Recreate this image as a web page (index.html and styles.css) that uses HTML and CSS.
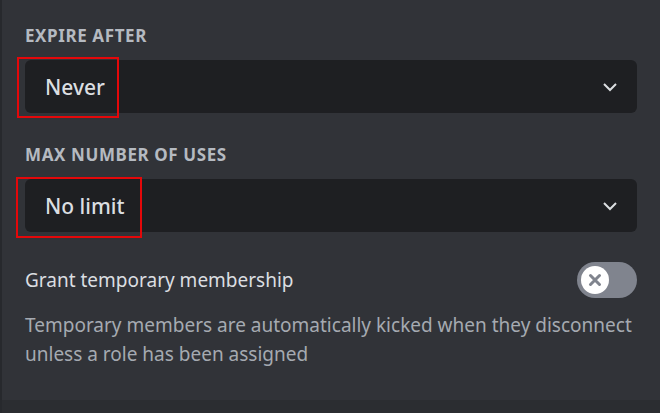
FILE: index.html
```html
<!DOCTYPE html>
<html>
<head>
<meta charset="utf-8">
<link rel="stylesheet" href="styles.css">
</head>
<body>
<div class="panel">
  <div class="content">
    <div class="field">
      <div class="label">Expire After</div>
      <div class="select">
        <span class="value">Never</span>
        <svg class="chevron" width="16" height="10" viewBox="0 0 16 10"><path d="M2 2 L8 8 L14 2" fill="none" stroke="#dbdee1" stroke-width="2"/></svg>
        <div class="mark mark-1"></div>
      </div>
    </div>
    <div class="field">
      <div class="label">Max Number of Uses</div>
      <div class="select">
        <span class="value">No limit</span>
        <svg class="chevron" width="16" height="10" viewBox="0 0 16 10"><path d="M2 2 L8 8 L14 2" fill="none" stroke="#dbdee1" stroke-width="2"/></svg>
        <div class="mark mark-2"></div>
      </div>
    </div>
    <div class="toggle-row">
      <span class="toggle-label">Grant temporary membership</span>
      <div class="toggle">
        <div class="knob">
          <svg width="16" height="16" viewBox="0 0 16 16"><path d="M3.5 3.5 L12.5 12.5 M12.5 3.5 L3.5 12.5" stroke="#80848e" stroke-width="3" stroke-linecap="round"/></svg>
        </div>
      </div>
    </div>
    <p class="desc">Temporary members are automatically kicked when they disconnect unless a role has been assigned</p>
  </div>
  <div class="footer"></div>
</div>
</body>
</html>
```

FILE: styles.css
```css
* { box-sizing: border-box; }
html, body { margin: 0; padding: 0; }
body {
  width: 660px;
  height: 413px;
  overflow: hidden;
  background: #313338;
  font-family: "Noto Sans", "Open Sans", sans-serif;
}
.panel {
  height: 413px;
  display: flex;
  flex-direction: column;
  border-left: 2px solid #27292d;
}
.content {
  flex: 1;
  padding: 26px 23px 0 23px;
}
.field + .field { margin-top: 32px; }
.label {
  text-transform: uppercase;
  font-weight: 700;
  font-size: 17px;
  line-height: 20px;
  letter-spacing: 0.6px;
  color: #b5bac1;
  margin-bottom: 14px;
}
.select {
  position: relative;
  height: 53px;
  background: #1e1f22;
  border-radius: 6px;
  display: flex;
  align-items: center;
  justify-content: space-between;
  padding: 0 19px 0 20px;
}
.value {
  font-size: 21px;
  color: #dbdee1;
  font-weight: 500;
}
.chevron { display: block; }
.mark {
  position: absolute;
  border: 2px solid #e4080a;
  top: -3px;
  left: -8px;
  height: 61px;
}
.mark-1 { width: 102px; }
.mark-2 { width: 126px; left: -9px; top: -2px; }
.toggle-row {
  margin-top: 30px;
  display: flex;
  align-items: center;
  justify-content: space-between;
  height: 36px;
}
.toggle-label {
  font-size: 19px;
  color: #dbdee1;
}
.toggle {
  width: 60px;
  height: 36px;
  border-radius: 18px;
  background: #80848e;
  padding: 4px;
  display: flex;
  align-items: center;
}
.knob {
  width: 28px;
  height: 28px;
  border-radius: 50%;
  background: #ffffff;
  display: flex;
  align-items: center;
  justify-content: center;
}
.knob svg { display: block; }
.desc {
  margin: 13px 0 0 0;
  font-size: 19px;
  line-height: 29px;
  color: #a5aab1;
}
.footer {
  height: 13px;
  background: #2b2d31;
}
```
